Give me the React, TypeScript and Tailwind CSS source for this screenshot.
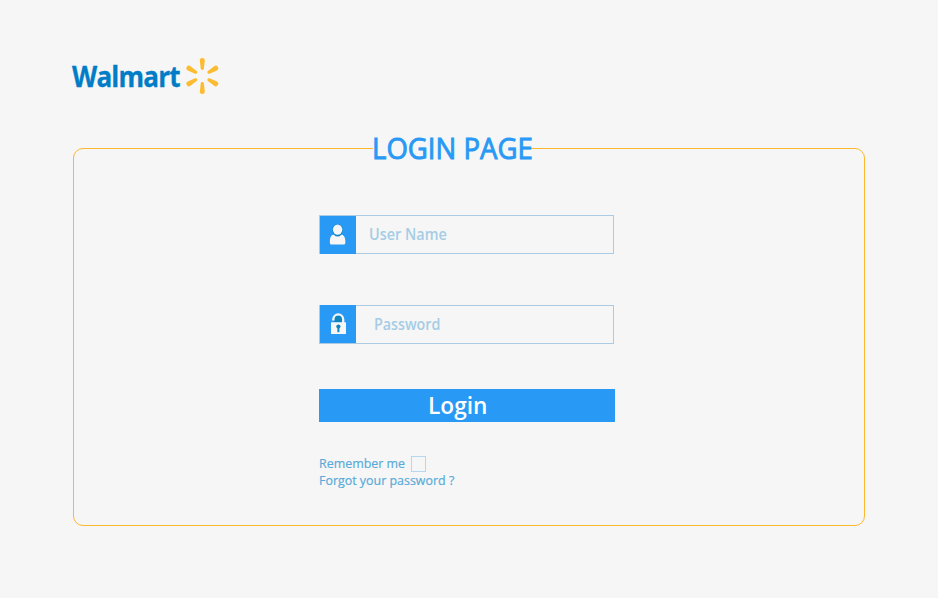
import { ReactNode } from "react";

function Walmart() {
  return (
    <header className="ml-[71px] flex h-[36px] pt-[58px] box-content">
      <div className="w-[114px] pt-[3px] pl-px">
        <span className="inline-block origin-left scale-x-[0.915] whitespace-nowrap text-[28.5px] leading-[30px] font-bold tracking-[-0.9px] text-[#007dc6] [-webkit-text-stroke:0.3px_#007dc6]">
          Walmart
        </span>
      </div>
      <svg width="35" height="36" viewBox="0 0 35 36" fill="#fdbb30">
        {[0, 60, 120, 180, 240, 300].map((angle) => (
          <path
            key={angle}
            transform={`rotate(${angle} 17.3 18)`}
            d="M14.8 2 Q14.8 0 17.3 0 Q19.8 0 19.8 2 L18.9 10.6 Q18.7 11.9 17.3 11.9 Q15.9 11.9 15.7 10.6 Z"
          />
        ))}
      </svg>
    </header>
  );
}

function Field({ icon, children }: { icon: ReactNode; children: ReactNode }) {
  return (
    <div className="flex h-[39px] w-[295px] border border-[#aacbe3]">
      {icon}
      {children}
    </div>
  );
}

const UserIcon = () => (
  <svg className="h-[38px] w-[36px] shrink-0 bg-[#2899f4]" viewBox="0 0 36 38">
    <path d="M10 27.5 C9.4 22 11 18.5 14 18.5 H21 C24 18.5 25.8 22 25.2 27.5 Q25 28.5 24 28.5 H11.2 Q10.2 28.5 10 27.5Z" fill="#f6f6f6" />
    <ellipse cx="17.6" cy="14.2" rx="5.2" ry="6.3" fill="#1389c4" />
    <ellipse cx="17.6" cy="13.6" rx="4.7" ry="5.2" fill="#f6f6f6" />
  </svg>
);

const LockIcon = () => (
  <svg className="-mt-px h-[38px] w-[36px] shrink-0 bg-[#2899f4]" viewBox="0 0 36 38">
    <path d="M14.5 17.5 V14.5 C14.5 9 22.3 9 22.3 14.5 V17.5 Z" fill="#0d85bd" />
    <path d="M13.3 15.6 V14.6 C13.3 7.7 23.2 7.7 23.2 14.6 V18" fill="none" stroke="#f6f6f6" strokeWidth="2.3" />
    <rect x="11" y="17.3" width="15" height="11.7" rx="0.5" fill="#f6f6f6" />
    <circle cx="18.4" cy="21.5" r="2.1" fill="#0d85bd" />
    <rect x="17.4" y="22" width="2" height="5.2" fill="#0d85bd" />
  </svg>
);

export default function App() {
  return (
    <main className="h-[598px] w-[938px] overflow-hidden bg-[#f6f6f6] font-['Open_Sans','Noto_Sans',sans-serif]">
      <Walmart />
      <section className="mt-[54px] ml-[73px] h-[378px] w-[792px] rounded-[10px] border border-[#fdb92e]">
        <h1 className="-mt-[16px] ml-[299px] h-[32px] w-[158px] bg-[#f6f6f6]">
          <span className="-ml-px inline-block origin-left scale-x-[0.95] whitespace-nowrap text-[29px] leading-[30px] text-[#2899f4] [-webkit-text-stroke:0.9px_#2899f4]">
            LOGIN PAGE
          </span>
        </h1>
        <form className="mt-[50px] ml-[245px] w-[296px]">
          <Field icon={<UserIcon />}>
            <span className="ml-[13px] inline-block h-[37px] origin-left scale-x-[0.93] text-[15.5px] leading-[37px] font-semibold whitespace-nowrap text-[#a5cde6]">
              User Name
            </span>
          </Field>
          <div className="mt-[51px]">
            <Field icon={<LockIcon />}>
              <span className="ml-[18px] inline-block h-[37px] origin-left scale-x-[0.92] text-[15.5px] leading-[37px] font-semibold whitespace-nowrap text-[#a5cde6]">
                Password
              </span>
            </Field>
          </div>
          <button type="button" className="mt-[45px] block h-[33px] w-[296px] bg-[#2899f4] pb-[2px] pl-[109px] text-left text-white">
            <span className="block origin-left scale-x-[0.985] text-[23px] leading-[30px] font-semibold whitespace-nowrap">Login</span>
          </button>
          <div className="mt-[34px] flex h-[16px] text-[13.3px] leading-[15px] text-[#58abd9] [-webkit-text-stroke:0.2px_#58abd9]">
            <span className="w-[92px] origin-left scale-x-[0.935] whitespace-nowrap">Remember me</span>
            <i className="h-[16px] w-[15px] border border-[#b3d8f0]" />
          </div>
          <a className="block origin-left scale-x-[0.935] text-[13.3px] leading-[16px] whitespace-nowrap text-[#58abd9] [-webkit-text-stroke:0.2px_#58abd9]">
            Forgot your password ?
          </a>
        </form>
      </section>
    </main>
  );
}
